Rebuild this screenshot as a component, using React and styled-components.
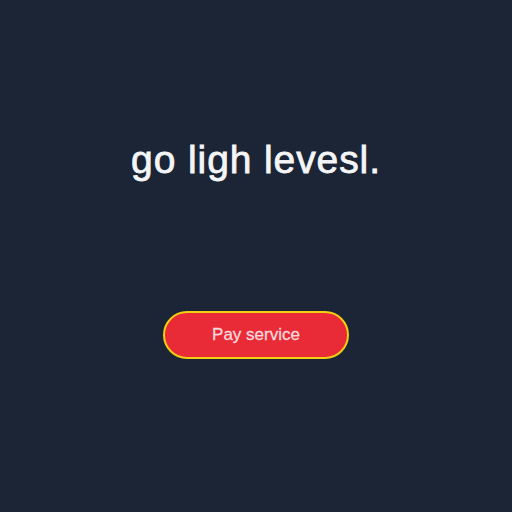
import React from 'react';
import styled, { createGlobalStyle } from 'styled-components';

const GlobalStyle = createGlobalStyle`
    html, body {
        margin: 0;
        padding: 0;
        background: #1b2535;
    }
`

const App = () => {
    return (
    <Page>
        <GlobalStyle />
        <Heading>go ligh levesl.</Heading>
        <PayButton type='button'>Pay service</PayButton>
    </Page>);
}

export default App;


const Page = styled.div`
    width: 512px;
    height: 512px;
    background: #1b2535;
    display: flex;
    flex-direction: column;
    align-items: center;
    padding-top: 136px;
    box-sizing: border-box;
    font-family: "Liberation Sans", Arial, sans-serif;
`

const Heading = styled.h1`
    margin: 0;
    color: #f4f5f7;
    font-size: 39px;
    font-weight: 400;
    letter-spacing: 0.9px;
    line-height: 48px;
    -webkit-text-stroke: 0.8px #f4f5f7;
`

const PayButton = styled.button`
    margin-top: 127px;
    width: 186px;
    height: 48px;
    border-radius: 24px;
    border: 2px solid #f2cf12;
    background: #e92a37;
    color: #fbd9dc;
    font-family: "Liberation Sans", Arial, sans-serif;
    font-size: 17px;
    padding: 0;
    cursor: pointer;
    -webkit-text-stroke: 0.3px #fbd9dc;
`
